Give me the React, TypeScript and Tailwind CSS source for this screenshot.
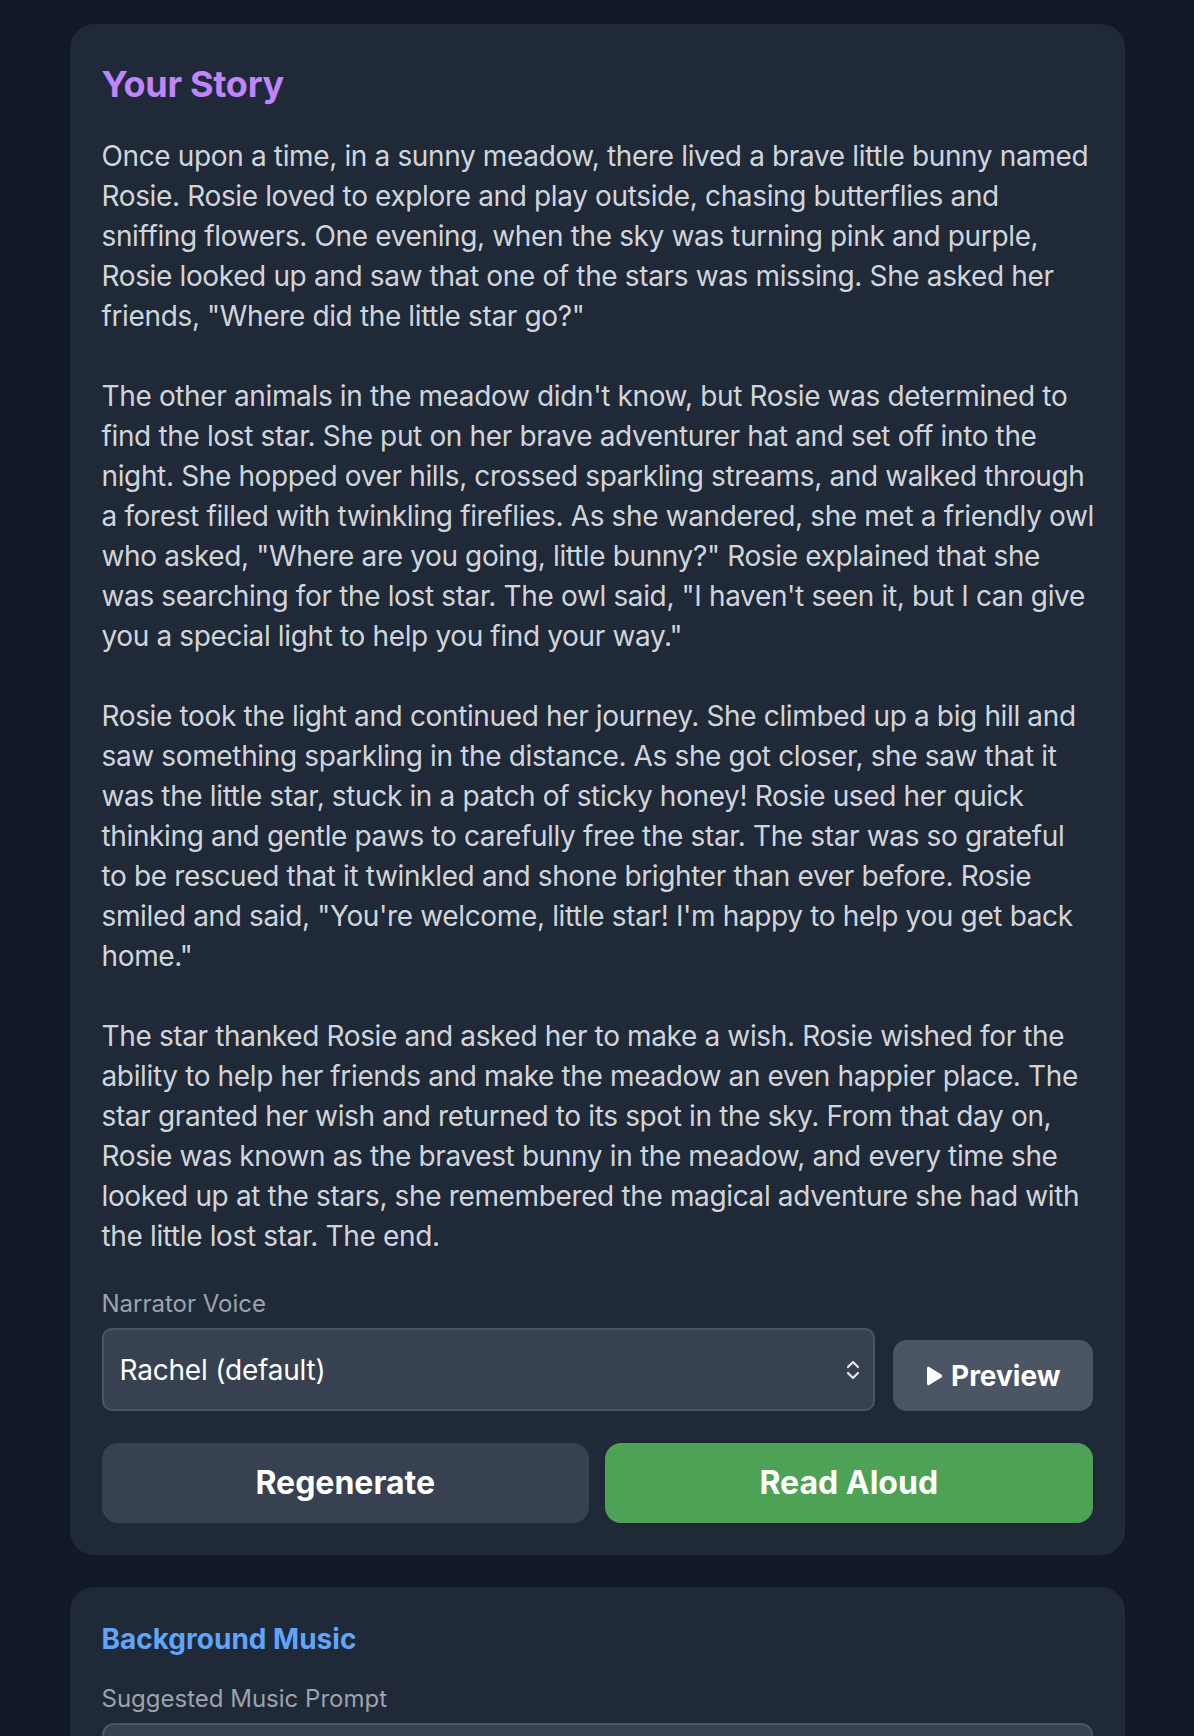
import React from 'react';

const story: string[][] = [
  [
    'Once upon a time, in a sunny meadow, there lived a brave little bunny named',
    'Rosie. Rosie loved to explore and play outside, chasing butterflies and',
    'sniffing flowers. One evening, when the sky was turning pink and purple,',
    'Rosie looked up and saw that one of the stars was missing. She asked her',
    'friends, "Where did the little star go?"',
  ],
  [
    "The other animals in the meadow didn't know, but Rosie was determined to",
    'find the lost star. She put on her brave adventurer hat and set off into the',
    'night. She hopped over hills, crossed sparkling streams, and walked through',
    'a forest filled with twinkling fireflies. As she wandered, she met a friendly owl',
    'who asked, "Where are you going, little bunny?" Rosie explained that she',
    'was searching for the lost star. The owl said, "I haven\'t seen it, but I can give',
    'you a special light to help you find your way."',
  ],
  [
    'Rosie took the light and continued her journey. She climbed up a big hill and',
    'saw something sparkling in the distance. As she got closer, she saw that it',
    'was the little star, stuck in a patch of sticky honey! Rosie used her quick',
    'thinking and gentle paws to carefully free the star. The star was so grateful',
    'to be rescued that it twinkled and shone brighter than ever before. Rosie',
    'smiled and said, "You\'re welcome, little star! I\'m happy to help you get back',
    'home."',
  ],
  [
    'The star thanked Rosie and asked her to make a wish. Rosie wished for the',
    'ability to help her friends and make the meadow an even happier place. The',
    'star granted her wish and returned to its spot in the sky. From that day on,',
    'Rosie was known as the bravest bunny in the meadow, and every time she',
    'looked up at the stars, she remembered the magical adventure she had with',
    'the little lost star. The end.',
  ],
];

const SelectArrows = () => (
  <svg width="16" height="22" viewBox="0 0 16 22" fill="none" stroke="#e5e7eb" strokeWidth="2.2" strokeLinecap="round" strokeLinejoin="round">
    <path d="M3 8 L8 3 L13 8" />
    <path d="M3 14 L8 19 L13 14" />
  </svg>
);

const PlayIcon = () => (
  <svg width="18" height="22" viewBox="0 0 18 22" fill="white">
    <path d="M2 3.2 C2 2 3.2 1.4 4.2 2 L16.4 9.6 C17.3 10.2 17.3 11.8 16.4 12.4 L4.2 20 C3.2 20.6 2 20 2 18.8 Z" />
  </svg>
);

export default function App() {
  return (
    <div className="min-h-screen bg-[#111827] pt-6 font-['Inter',sans-serif]">
      <div className="max-w-[1055px] mx-auto">
        {/* Story card */}
        <div className="bg-[#1f2937] rounded-[24px] p-8">
          <h2 className="text-[36px] leading-[56px] font-bold tracking-[-0.3px] text-[#c084fc] mb-6">Your Story</h2>
          <div className="text-[28px] leading-[40px] tracking-[-0.36px] text-[#d1d5db] mb-8">
            {story.map((para, pi) => (
              <div key={pi} className={pi > 0 ? 'mt-10' : ''}>
                {para.map((line, li) => (
                  <div key={li} className="whitespace-nowrap">{line}</div>
                ))}
              </div>
            ))}
          </div>

          <label className="block text-[24px] leading-[32px] text-[#9ca3af] mb-2">Narrator Voice</label>
          <div className="flex items-end gap-[18px] mb-8">
            <div className="flex-1 h-[83px] flex items-center justify-between pl-4 pr-3 bg-[#374151] border-2 border-[#4b5563] rounded-[10px]">
              <span className="text-[28px] tracking-[-0.2px] text-white">Rachel (default)</span>
              <SelectArrows />
            </div>
            <button className="h-[71px] px-8 flex items-center gap-2 bg-[#4b5563] rounded-[14px] text-white text-[28px] font-bold">
              <PlayIcon />
              <span>Preview</span>
            </button>
          </div>

          <div className="grid grid-cols-2 gap-4">
            <button className="h-20 rounded-[16px] bg-[#374151] text-white text-[32px] font-bold">Regenerate</button>
            <button className="h-20 rounded-[16px] bg-[#4ea256] text-white text-[32px] font-bold">Read Aloud</button>
          </div>
        </div>

        {/* Music card */}
        <div className="bg-[#1f2937] rounded-[24px] p-8 mt-8">
          <h2 className="text-[28px] leading-[40px] font-bold text-[#60a5fa] mb-6">Background Music</h2>
          <label className="block text-[24px] leading-[32px] text-[#9ca3af] mb-2">Suggested Music Prompt</label>
          <div className="h-[120px] bg-[#374151] border-2 border-[#4b5563] rounded-[12px]" />
        </div>
      </div>
    </div>
  );
}
